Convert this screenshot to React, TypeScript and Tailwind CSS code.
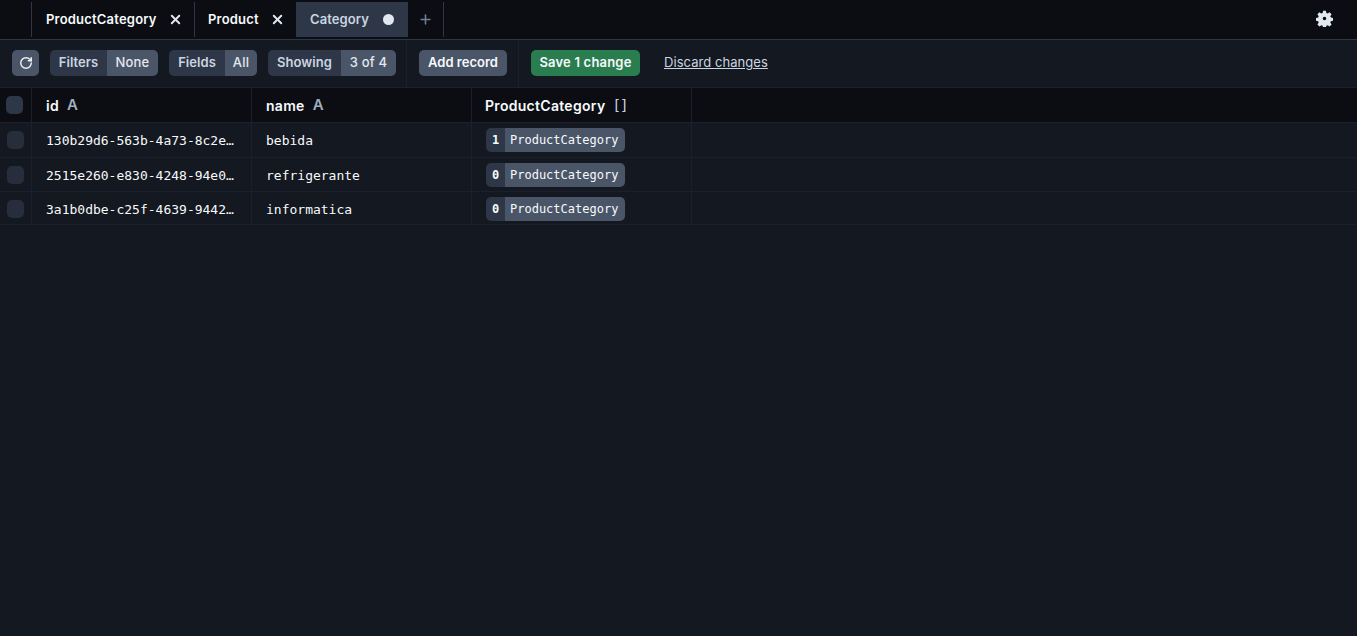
import { Plus, RotateCw, X } from "lucide-react";

const inter = "font-['Inter',sans-serif]";
const mono = "font-['DejaVu_Sans_Mono',monospace]";

function Pair({ label, value, w1, w2 }: { label: string; value: string; w1: string; w2: string }) {
  return (
    <div className="flex h-[26px] rounded-[5px] overflow-hidden text-[13px] font-semibold tracking-[0.05px] leading-[24px] text-[#cbd5e0]">
      <div className={`${w1} bg-[#2d3748] text-center`}>{label}</div>
      <div className={`${w2} bg-[#4a5568] text-center font-medium tracking-[0.2px] text-[#e2e8f0]`}>{value}</div>
    </div>
  );
}

function Row({ id, name, count, h, rowPad, textPad }: { id: string; name: string; count: string; h: string; rowPad: string; textPad: string }) {
  return (
    <div className={`flex ${h} border-b border-[#1a202c] text-[13px] text-[#f7fafc] ${mono}`}>
      <div className={`w-8 shrink-0 border-r border-[#1a202c] flex items-center justify-center ${rowPad}`}>
        <div className="w-[17px] h-[18px] rounded-[5px] bg-[#2d3748] opacity-70" />
      </div>
      <div className={`w-[220px] shrink-0 border-r border-[#1a202c] pl-[14px] flex items-center whitespace-nowrap ${textPad}`}>{id}</div>
      <div className={`w-[220px] shrink-0 border-r border-[#1a202c] pl-[14px] flex items-center ${textPad}`}>{name}</div>
      <div className={`w-[220px] shrink-0 border-r border-[#1a202c] pl-[14px] flex items-center ${rowPad}`}>
        <div className="flex h-6 rounded-[5px] overflow-hidden text-[12px] leading-6">
          <div className="w-[19px] bg-[#2d3748] text-center font-bold">{count}</div>
          <div className="w-[120px] bg-[#4a5568] pl-[5px]">ProductCategory</div>
        </div>
      </div>
    </div>
  );
}

function Head({ title, type, w, pl }: { title: string; type: string; w: string; pl: string }) {
  return (
    <div className={`${w} ${pl} shrink-0 border-r border-[#1a202c] flex items-center text-[14px] font-semibold tracking-[0.3px] text-[#f7fafc]`}>
      <span>{title}</span>
      <span className="ml-[8px] text-[15px] tracking-normal font-semibold text-[#a0aec0]">{type}</span>
    </div>
  );
}

export default function App() {
  return (
    <div className={`${inter} w-[1357px] h-[636px] overflow-hidden bg-[#141820] flex flex-col`}>
      <div className="h-10 shrink-0 bg-[#0b0d12] border-b border-[#2d3748] flex items-start pt-[2px] relative">
        <div className="w-8 h-[35px] border-r border-[#2d3748]" />
        <div className="w-[163px] h-[35px] border-r border-[#2d3748] flex items-center pl-[14px] text-[13px] font-semibold tracking-[0.2px] text-[#f7fafc]">
          <span>ProductCategory</span>
          <X size={15} strokeWidth={3} className="ml-[11px] text-[#e2e8f0]" />
        </div>
        <div className="w-[101px] h-[35px] flex items-center pl-[13px] text-[13px] font-semibold tracking-[0.2px] text-[#f7fafc]">
          <span>Product</span>
          <X size={15} strokeWidth={3} className="ml-[11px] text-[#e2e8f0]" />
        </div>
        <div className="w-[112px] h-[35px] bg-[#2d3748] flex items-center pl-[14px] text-[13px] font-semibold tracking-[0.1px] text-[#cbd5e0]">
          <span>Category</span>
          <span className="ml-[14px] w-[11px] h-[11px] rounded-full bg-[#e2e8f0]" />
        </div>
        <div className="w-[36px] h-[35px] border-r border-[#2d3748] flex items-center justify-center text-[#718096]">
          <Plus size={15} strokeWidth={2.5} />
        </div>
        <svg viewBox="0 0 24 24" className="ml-auto mr-[24px] mt-[8px] w-[17px] h-[17px] text-[#e2e8f0]" fill="currentColor">
          <path fillRule="evenodd" clipRule="evenodd" d="M10 1h4l.6 3.2 1.9.8 2.7-1.8 2.8 2.8-1.8 2.7.8 1.9 3.2.6v4l-3.2.6-.8 1.9 1.8 2.7-2.8 2.8-2.7-1.8-1.9.8-.6 3.2h-4l-.6-3.2-1.9-.8-2.7 1.8-2.8-2.8 1.8-2.7-.8-1.9-3.2-.6v-4l3.2-.6.8-1.9-1.8-2.7 2.8-2.8 2.7 1.8 1.9-.8zM12 9.5a2.5 2.5 0 100 5 2.5 2.5 0 000-5z" />
        </svg>
      </div>

      <div className="h-[48px] shrink-0 border-b border-[#1a202c] flex items-center pl-3">
        <div className="self-start mt-[10px] w-[27px] h-[26px] rounded-[5px] bg-[#4a5568] flex items-center justify-center text-[#edf2f7]">
          <RotateCw size={14} strokeWidth={2.5} />
        </div>
        <div className="self-start mt-[10px] ml-[11px] flex gap-[11px] items-center">
          <Pair label="Filters" value="None" w1="w-[57px]" w2="w-[51px]" />
          <Pair label="Fields" value="All" w1="w-[56px]" w2="w-[32px]" />
          <Pair label="Showing" value="3 of 4" w1="w-[73px]" w2="w-[55px]" />
        </div>
        <div className="ml-[10px] h-full border-l border-[#1a202c] pl-3 pt-[10px]">
          <div className="w-[88px] h-[26px] rounded-[5px] bg-[#4a5568] text-center text-[13px] leading-[24px] font-semibold text-[#f7fafc]">Add record</div>
        </div>
        <div className="ml-[11px] h-full border-l border-[#1a202c] pl-3 pt-[10px] flex items-start">
          <div className="w-[109px] h-[26px] rounded-[5px] bg-[#2a7d4f] text-center text-[13px] leading-[24px] tracking-[0.2px] font-semibold text-[#f7fafc]">Save 1 change</div>
          <span className="ml-6 text-[13px] leading-[24px] tracking-[0.05px] text-[#cbd5e0] underline">Discard changes</span>
        </div>
      </div>

      <div className="flex h-[35px] shrink-0 bg-[#0b0d12] border-b border-[#1a202c]">
        <div className="w-8 shrink-0 border-r border-[#1a202c] flex items-center pl-[6px]">
          <div className="w-[17px] h-[18px] rounded-[5px] bg-[#2d3748]" />
        </div>
        <Head title="id" type="A" w="w-[220px]" pl="pl-[14px]" />
        <Head title="name" type="A" w="w-[220px]" pl="pl-[14px]" />
        <div className="w-[220px] pl-[13px] shrink-0 border-r border-[#1a202c] flex items-center text-[14px] font-semibold tracking-[0.3px] text-[#f7fafc]">
          <span>ProductCategory</span>
          <span className={`ml-[7px] text-[14px] font-normal tracking-[-1px] text-[#cbd5e0] ${mono}`}>[]</span>
        </div>
      </div>
      <Row id="130b29d6-563b-4a73-8c2e…" name="bebida" count="1" h="h-[35px]" rowPad="" textPad="pt-[2px]" />
      <Row id="2515e260-e830-4248-94e0…" name="refrigerante" count="0" h="h-[34px]" rowPad="" textPad="pt-[2px]" />
      <Row id="3a1b0dbe-c25f-4639-9442…" name="informatica" count="0" h="h-[33px]" rowPad="pt-[2px]" textPad="pt-[4px]" />
    </div>
  );
}
